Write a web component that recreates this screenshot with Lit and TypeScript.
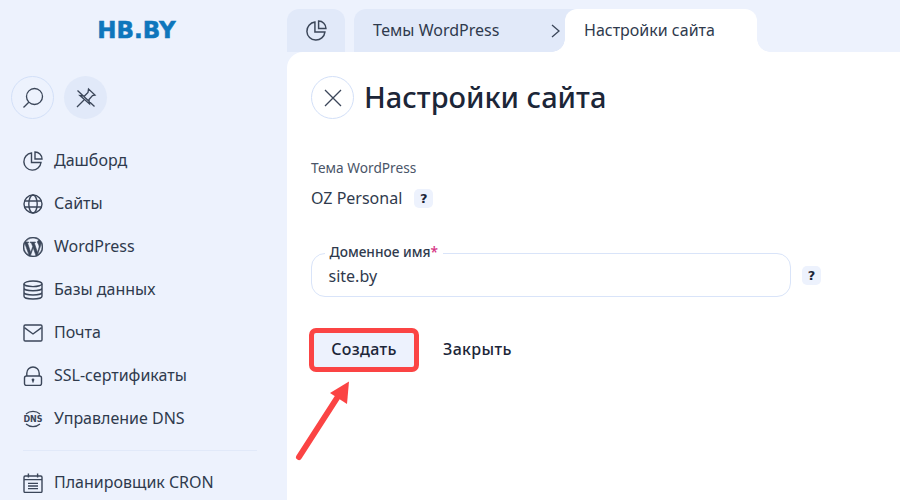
import { LitElement, css, html, svg } from "lit";
import { customElement } from "lit/decorators.js";

const icons = {
  pie: svg`<path d="M8.500 2A8.600 8.600 0 1 0 18 11.500H8.500z"/><path d="M12 1v7h7a7 7 0 0 0-7-7z"/>`,
  globe: svg`<circle cx="10" cy="10" r="9"/><ellipse cx="10" cy="10" rx="4.200" ry="9"/><path d="M1.600 7h16.800M1.600 13h16.800"/>`,
  db: svg`<ellipse cx="10" cy="3.800" rx="9" ry="2.800"/><path d="M1 3.800v12.400C1 17.800 5 19 10 19s9-1.200 9-2.800V3.800M1 8c0 1.600 4 2.800 9 2.800S19 9.600 19 8M1 12.200C1 13.800 5 15 10 15s9-1.200 9-2.800"/>`,
  mail: svg`<rect x="1" y="2" width="18" height="16" rx="1.200"/><path d="M1.400 4.600 10 11l8.600-6.400"/>`,
  lock: svg`<rect x="1.500" y="10" width="17" height="9.500" rx="2"/><path d="M3.800 10V7.200a6.200 6.200 0 0 1 12.400 0V10"/><path d="M10 14v2.600"/><circle cx="10" cy="13.800" r=".7"/>`,
  cal: svg`<rect x="1" y="3" width="18" height="16.400" rx="1.200"/><path d="M5.400 .6v3.800M14.600 .6v3.800M1 6.600h18M5 10.400h10M5 13h10M5 15.600h10"/>`,
};

const menu = [
  { name: "Дашборд", icon: "pie" },
  { name: "Сайты", icon: "globe" },
  { name: "WordPress", icon: "wp" },
  { name: "Базы данных", icon: "db" },
  { name: "Почта", icon: "mail" },
  { name: "SSL-сертификаты", icon: "lock" },
  { name: "Управление DNS", icon: "dns" },
];

const wpPath =
  "M21.469 6.825c.84 1.537 1.318 3.3 1.318 5.175 0 3.979-2.156 7.456-5.363 9.325l3.295-9.527c.615-1.54.82-2.771.82-3.864 0-.405-.026-.78-.07-1.11m-7.981.105c.647-.03 1.232-.105 1.232-.105.582-.075.514-.93-.067-.899 0 0-1.755.135-2.88.135-1.064 0-2.85-.15-2.85-.15-.585-.03-.661.855-.075.885 0 0 .54.061 1.125.09l1.68 4.605-2.37 7.08L5.354 6.9c.649-.03 1.234-.1 1.234-.1.585-.075.516-.93-.065-.896 0 0-1.746.138-2.874.138-.2 0-.438-.008-.69-.015C4.911 3.15 8.235 1.215 12 1.215c2.809 0 5.365 1.072 7.286 2.833-.046-.003-.091-.009-.141-.009-1.06 0-1.812.923-1.812 1.914 0 .89.513 1.643 1.06 2.531.411.72.89 1.643.89 2.977 0 .915-.354 1.994-.821 3.479l-1.075 3.585-3.9-11.61.001.014zM12 22.784c-1.059 0-2.081-.153-3.048-.437l3.237-9.406 3.315 9.087c.024.053.05.101.078.149-1.12.393-2.325.609-3.582.609M1.211 12c0-1.564.336-3.05.935-4.39L7.29 21.709C3.694 19.96 1.212 16.271 1.211 12M12 0C5.385 0 0 5.385 0 12s5.385 12 12 12 12-5.385 12-12S18.615 0 12 0";

function lineIcon(name: keyof typeof icons) {
  return html`<svg class="ico" viewBox="0 0 20 20">${icons[name]}</svg>`;
}

@customElement("app-root")
export class AppRoot extends LitElement {
  static styles = css`
    :host {
      display: flex;
      width: 900px;
      height: 500px;
      overflow: hidden;
      position: relative;
      background: #edf2fd;
      font-family: "Noto Sans", Roboto, sans-serif;
      font-size: 16px;
      color: #2f3a4d;
    }
    .ico {
      width: 20px;
      height: 20px;
      fill: none;
      stroke: #3b4659;
      stroke-width: 1.4;
      flex: none;
    }
    .side {
      width: 287px;
      flex: none;
      padding: 0 11px;
      box-sizing: border-box;
    }
    .logo {
      height: 60px;
      padding: 18px 14px 0 0;
      box-sizing: border-box;
      text-align: center;
      font: 700 23px/24px "DejaVu Sans", sans-serif;
      color: #0e76bc;
      -webkit-text-stroke: 0.5px #0e76bc;
    }
    .tools {
      display: flex;
      gap: 10px;
      margin: 16px 0 20px;
    }
    .round {
      width: 43px;
      height: 43px;
      border-radius: 50%;
      box-sizing: border-box;
      display: flex;
      align-items: center;
      justify-content: center;
      flex: none;
    }
    .round.line {
      border: 1px solid #d3e0f8;
    }
    .round.fill {
      background: #e1e9f9;
    }
    .round svg {
      width: 22px;
      height: 22px;
      fill: none;
      stroke: #3b4659;
      stroke-width: 1.3;
    }
    .item {
      height: 43px;
      display: flex;
      align-items: center;
      gap: 11px;
      padding-left: 12px;
    }
    .item span {
      padding-bottom: 2px;
    }
    .wp {
      width: 20px;
      height: 20px;
      fill: #3b4659;
      stroke: #3b4659;
      stroke-width: 0.7;
      flex: none;
    }
    .dns {
      width: 22px;
      height: 20px;
      margin: 0 -1px;
      flex: none;
    }
    .dns text {
      font: 700 8px "DejaVu Sans", sans-serif;
      fill: #3b4659;
    }
    .dns path {
      fill: none;
      stroke: #3b4659;
      stroke-width: 1.2;
    }
    hr {
      margin: 10px 19px 10px 12px;
      border: 0;
      border-top: 1px solid #e1e9f9;
    }
    .main {
      flex: 1;
      min-width: 0;
    }
    .tabs {
      display: flex;
      height: 43px;
      margin-top: 9px;
    }
    .tab {
      background: #e1e9f9;
      display: flex;
      align-items: center;
      border-radius: 12px 12px 0 0;
      box-sizing: border-box;
    }
    .tab.home {
      width: 58px;
      justify-content: center;
      margin-right: 9px;
    }
    .tab.home .ico {
      width: 21px;
      height: 21px;
    }
    .tab.crumb {
      width: 223px;
      margin-right: -12px;
      padding: 0 12px 2px 19px;
      justify-content: space-between;
      border-radius: 12px 0 0 0;
    }
    .tab.crumb svg {
      width: 9px;
      height: 14px;
      fill: none;
      stroke: #3b4659;
      stroke-width: 1.3;
      margin: 2px 5px 0 0;
    }
    .tab.active {
      width: 192px;
      padding: 0 0 2px 19px;
      background: #fff;
      position: relative;
    }
    .tab.active::before {
      content: "";
      position: absolute;
      left: 100%;
      bottom: 0;
      width: 13px;
      height: 13px;
      background: radial-gradient(circle at 100% 0, transparent 12.5px, #fff 13px);
    }
    .tab.active::after {
      content: "";
      position: absolute;
      right: 100%;
      bottom: 0;
      width: 13px;
      height: 13px;
      background: radial-gradient(circle at 0 0, transparent 12.5px, #fff 13px);
    }
    .panel {
      background: #fff;
      height: 448px;
      border-radius: 16px 0 0 0;
      padding: 24px;
      box-sizing: border-box;
    }
    .head {
      display: flex;
      align-items: center;
      gap: 10px;
    }
    h1 {
      margin: 0;
      padding-bottom: 2px;
      font-size: 29px;
      font-weight: 500;
      color: #1c2638;
    }
    .caption {
      margin-top: 39px;
      font-size: 13.7px;
      line-height: 20px;
      color: #4a5568;
    }
    .value {
      display: flex;
      align-items: center;
      gap: 12px;
      margin-top: 10px;
      line-height: 20px;
    }
    .hint {
      width: 19px;
      height: 19px;
      border-radius: 5px;
      background: #edf2fd;
      font: 700 13px/19px "DejaVu Sans", sans-serif;
      text-align: center;
      color: #1c2638;
      flex: none;
    }
    .field-row {
      display: flex;
      align-items: center;
      gap: 11px;
      margin-top: 45px;
    }
    .field {
      width: 480px;
      height: 44px;
      border: 1.5px solid #d9e4f9;
      border-radius: 14px;
      box-sizing: border-box;
      padding: 10.5px 16.5px 0;
      position: relative;
      line-height: 22px;
    }
    .legend {
      position: absolute;
      left: 12.5px;
      top: -11.5px;
      padding: 0 5px;
      background: #fff;
      font-size: 13.7px;
      font-weight: 500;
      line-height: 18px;
    }
    .legend b {
      color: #d63384;
      font-weight: 500;
    }
    .actions {
      display: flex;
      align-items: center;
      gap: 29px;
      margin: 36px 0 0 3px;
    }
    .btn {
      width: 100px;
      height: 34px;
      padding-bottom: 2px;
      box-sizing: border-box;
      display: flex;
      align-items: center;
      justify-content: center;
      font-weight: 500;
      letter-spacing: 0.35px;
      color: #1c2638;
    }
    .btn.primary {
      background: #edf2fd;
      outline: 5px solid #fb4444;
      border-radius: 2px;
    }
    .btn.plain {
      width: auto;
    }
    .arrow {
      position: absolute;
      left: 290px;
      top: 372px;
      width: 70px;
      height: 95px;
    }
  `;

  render() {
    return html`
      <aside class="side">
        <div class="logo">HB.BY</div>
        <div class="tools">
          <div class="round line">
            <svg viewBox="0 0 22 22"><circle cx="12.500" cy="9.500" r="8"/><path d="M6.800 15.200 1.500 20.500"/></svg>
          </div>
          <div class="round fill">
            <svg viewBox="0 0 22 22"><path d="M2 20l7-7M13.500 2l6.500 6-2.500.5-3.500 4 .5 4.500L5 8.500l4.500.5 3.500-3.500zM2.500 3.500l17 16"/></svg>
          </div>
        </div>
        ${menu.map((m) => html`
          <div class="item">${this.renderIcon(m.icon)}<span>${m.name}</span></div>
        `)}
        <hr />
        <div class="item">${lineIcon("cal")}<span>Планировщик CRON</span></div>
      </aside>
      <section class="main">
        <div class="tabs">
          <div class="tab home">${lineIcon("pie")}</div>
          <div class="tab crumb">
            <span>Темы WordPress</span>
            <svg viewBox="0 0 9 14"><path d="M1 1l7 6-7 6"/></svg>
          </div>
          <div class="tab active">Настройки сайта</div>
        </div>
        <div class="panel">
          <div class="head">
            <div class="round line">
              <svg viewBox="0 0 22 22"><path d="M3 3l16 16M19 3 3 19"/></svg>
            </div>
            <h1>Настройки сайта</h1>
          </div>
          <div class="caption">Тема WordPress</div>
          <div class="value"><span>OZ Personal</span><span class="hint">?</span></div>
          <div class="field-row">
            <div class="field">
              <span class="legend">Доменное имя<b>*</b></span>
              site.by
            </div>
            <span class="hint">?</span>
          </div>
          <div class="actions">
            <div class="btn primary">Создать</div>
            <div class="btn plain">Закрыть</div>
          </div>
        </div>
      </section>
      <svg class="arrow" viewBox="0 0 70 95">
        <path d="M9 85 47 26" stroke="#fb4444" stroke-width="6" stroke-linecap="round"/>
        <path d="M59 9.500 40 21 57 32z" fill="#fb4444"/>
      </svg>
    `;
  }

  renderIcon(name: string) {
    if (name === "wp") {
      return html`<svg class="wp" viewBox="0 0 24 24"><path d=${wpPath}/></svg>`;
    }
    if (name === "dns") {
      return html`<svg class="dns" viewBox="0 0 22 20">
        <path d="M4 5C8 1.500 14 1.500 18 5M4 15C8 18.500 14 18.500 18 15"/>
        <text x="11" y="12.900" text-anchor="middle">DNS</text>
      </svg>`;
    }
    return lineIcon(name as keyof typeof icons);
  }
}
